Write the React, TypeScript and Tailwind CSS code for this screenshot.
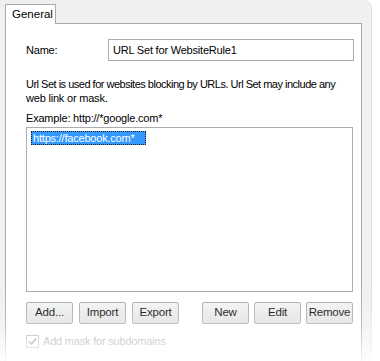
import React from "react";

const font = { fontFamily: '"Liberation Sans", Arial, sans-serif' };

function Btn({ label, w = "w-[47px]" }: { label: string; w?: string }) {
  return (
    <div
      className={`${w} h-[22px] flex items-center justify-center border border-[#acacac] bg-gradient-to-b from-[#f3f3f3] to-[#e0e0e0] text-[11.5px] text-black rounded-[2px]`}
    >
      {label}
    </div>
  );
}

export default function App() {
  return (
    <div className="w-[380px] h-[361px] bg-white relative overflow-hidden" style={font}>
      <div className="w-[372px] h-[361px] bg-[#f0f0f0] rounded-tr-[8px] border-r border-[#e2e2e2] pt-[4px] pl-[5px]">
        <div className="flex">
          <div className="h-[20px] w-[51px] bg-white border border-b-0 border-[#aaaaaa] flex items-center pl-[6px] text-[11.5px] text-black relative z-10">
            General
          </div>
        </div>
        <div className="-mt-[1px] w-[357px] h-[340px] bg-white border border-[#aaaaaa] pl-[20px] pt-[15px] text-[11px] tracking-[-0.2px] text-black">
          <div className="flex items-center h-[22px]">
            <div className="w-[82px]">Name:</div>
            <div className="w-[246px] h-[22px] border border-[#abadb3] flex items-center px-[4px]">
              URL Set for WebsiteRule1
            </div>
          </div>
          <div className="mt-[16px] leading-[14px] w-[330px] whitespace-nowrap">
            <div className="tracking-[-0.5px]">Url Set is used for websites blocking by URLs. Url Set may include any</div>
            <div>web link or mask.</div>
          </div>
          <div className="mt-[6px] leading-[14px]">Example: http://*google.com*</div>
          <div className="mt-[2px] w-[327px] h-[165px] border border-[#abadb3] pt-[2px] pl-[4px]">
            <div className="inline-block bg-[#3399ff] text-white border border-dotted border-[#222] pl-[1px] pr-[10px] leading-[12px]">
              https://facebook.com*
            </div>
          </div>
          <div className="mt-[10px] flex w-[327px]">
            <div className="flex gap-[6px]">
              <Btn label="Add..." />
              <Btn label="Import" />
              <Btn label="Export" />
            </div>
            <div className="ml-auto flex gap-[5px]">
              <Btn label="New" />
              <Btn label="Edit" />
              <Btn label="Remove" />
            </div>
          </div>
          <div className="mt-[9px] flex items-center gap-[4px] text-[#9a9a9a]">
            <div className="w-[13px] h-[13px] border border-[#b0b0b0] flex items-center justify-center">
              <svg width="9" height="9" viewBox="0 0 9 9">
                <path d="M1 4.5 L3.5 7 L8 1.5" stroke="#8a8a8a" strokeWidth="1.6" fill="none" />
              </svg>
            </div>
            <span>Add mask for subdomains</span>
          </div>
        </div>
      </div>
      <div className="absolute left-0 right-0 top-[290px] bottom-0 bg-gradient-to-b from-[rgba(255,255,255,0)] via-[rgba(255,255,255,0.25)] to-[rgba(255,255,255,0.9)] pointer-events-none" />
    </div>
  );
}
